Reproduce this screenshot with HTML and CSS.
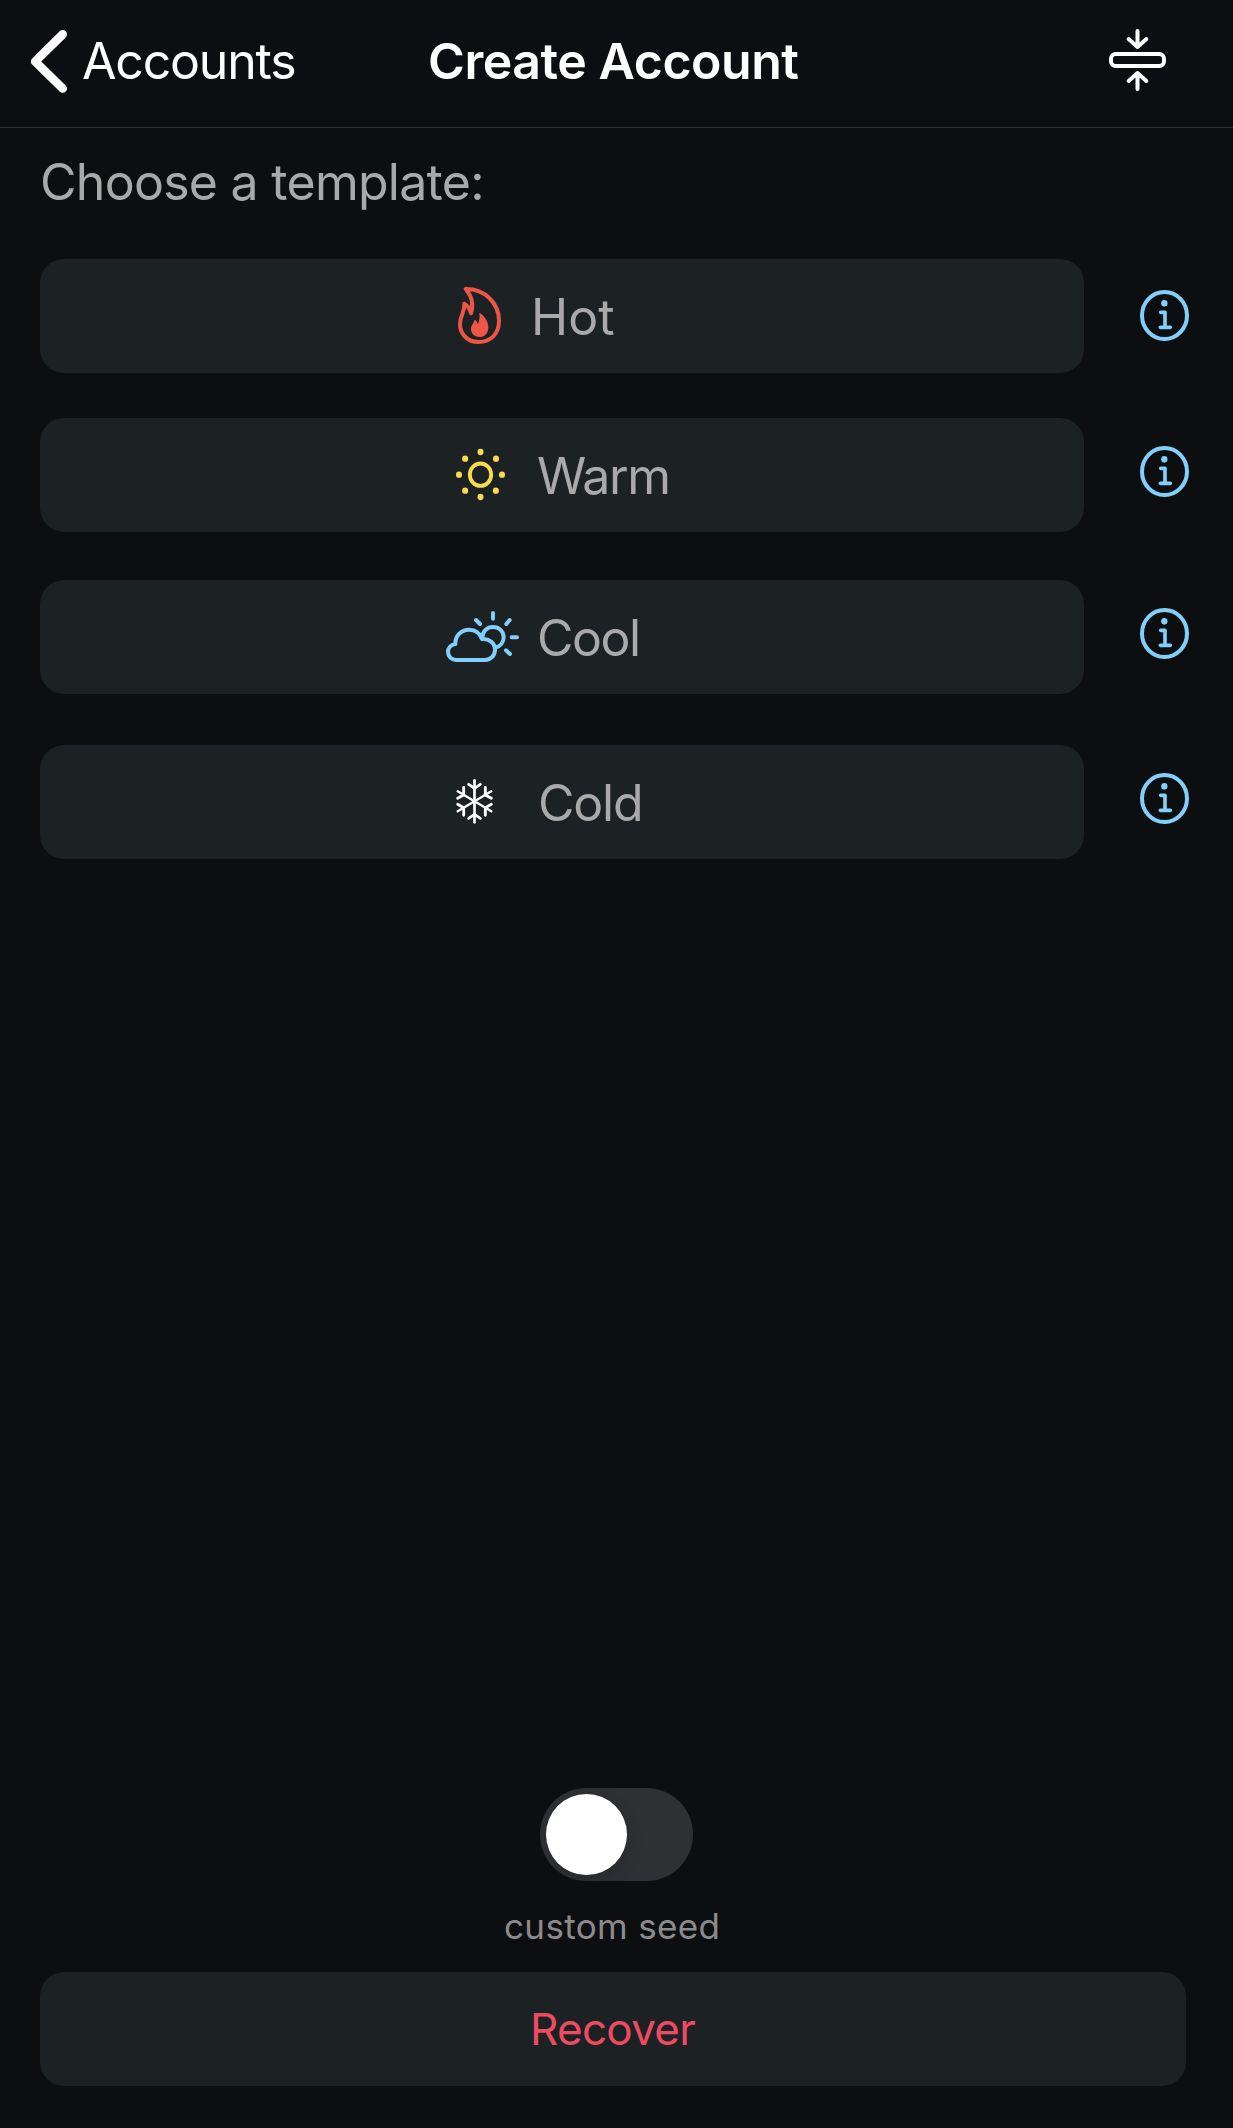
FILE: index.html
```html
<!DOCTYPE html>
<html lang="en">
<head>
<meta charset="utf-8">
<title>Create Account</title>
<link rel="stylesheet" href="styles.css">
</head>
<body>
<svg class="defs" aria-hidden="true">
  <symbol id="info" viewBox="231 111 162 168">
    <ellipse cx="313.500" cy="196.500" rx="67.500" ry="70.500" fill="none" stroke="currentColor" stroke-width="12"/>
    <ellipse cx="313" cy="160" rx="9.500" ry="10" fill="currentColor"/>
    <path d="M302 187H315V232M301 232H331" fill="none" stroke="currentColor" stroke-width="11" stroke-linecap="round" stroke-linejoin="round"/>
  </symbol>
</svg>
<header class="bar">
  <a class="back">
    <svg class="chevron" viewBox="84 84 126 201"><path d="M188 103L105.500 184.500L188 265.500" fill="none" stroke="#fff" stroke-width="26" stroke-linecap="round" stroke-linejoin="round"/></svg>
    <span class="t back-label">Accounts</span>
  </a>
  <h1 class="t title">Create Account</h1>
  <svg class="collapse" viewBox="75 42 195 216" fill="none" stroke="#fff" stroke-width="12" stroke-linecap="round" stroke-linejoin="round">
    <rect x="93" y="132" width="159" height="36" rx="14"/>
    <path d="M172.500 63V109M146 87L172.500 111L199 87M172.500 237V189M146 213L172.500 189L199 213"/>
  </svg>
</header>
<main class="content">
  <h2 class="t prompt">Choose a template:</h2>
  <div class="row hot">
    <button class="card">
      <svg class="icon" viewBox="30 -3 255 342">
        <path d="M107 87C165 86 207 130 207 182C207 222 182 246 145 246C112 246 90 222 90 192C90 165 105 158 103 131C113 136 119 145 123 160C132 132 125 108 107 87Z" fill="none" stroke="currentColor" stroke-width="12" stroke-linejoin="round"/>
        <path d="M148 158C170 172 175 190 175 203C175 220 163 231 148 231C132 231 123 220 123 207C123 195 131 190 134 179C139 181 142 187 143 192C148 183 150 171 148 158Z" fill="currentColor"/>
      </svg>
      <span class="t label">Hot</span>
    </button>
    <svg class="info"><use href="#info"/></svg>
  </div>
  <div class="row warm">
    <button class="card">
      <svg class="icon" viewBox="30 9 255 342" fill="currentColor">
        <ellipse cx="151.500" cy="179" rx="32" ry="33.500" fill="none" stroke="currentColor" stroke-width="11.500"/>
        <ellipse cx="151.500" cy="111" rx="9" ry="9.500"/><ellipse cx="151.500" cy="246" rx="9" ry="9.500"/>
        <ellipse cx="87" cy="179" rx="9" ry="9.500"/><ellipse cx="216" cy="179" rx="9" ry="9.500"/>
        <ellipse cx="105.500" cy="131" rx="9" ry="9.500"/><ellipse cx="198" cy="131" rx="9" ry="9.500"/>
        <ellipse cx="105.500" cy="227" rx="9" ry="9.500"/><ellipse cx="197.500" cy="227" rx="9" ry="9.500"/>
      </svg>
      <span class="t label">Warm</span>
    </button>
    <svg class="info"><use href="#info"/></svg>
  </div>
  <div class="row cool">
    <button class="card">
      <svg class="icon" viewBox="30 0 255 342" fill="none" stroke="currentColor" stroke-width="12" stroke-linecap="round" stroke-linejoin="round">
        <path d="M78 240H165C183 240 195 226 195 209C195 189 177 175 156 177C150 159 135 149 117 149C93 149 75 168 76 192C62 194 54 205 54 216C54 229 65 240 78 240Z"/>
        <path d="M157 172C158 154 171 141 189 141C207 141 221 154 221 172C221 187 211 199 197 203"/>
        <path d="M189 99V116M138 120L150 132M239 120L229 132M245 171.500H261M228 211L240 222"/>
      </svg>
      <span class="t label">Cool</span>
    </button>
    <svg class="info"><use href="#info"/></svg>
  </div>
  <div class="row cold">
    <button class="card">
      <svg class="icon" viewBox="30 15 255 342" fill="none" stroke="currentColor" stroke-width="8.500" stroke-linecap="round" stroke-linejoin="round">
        <path d="M133.500 121V247" stroke-width="8"/>
        <path d="M83 154L184 214M184 154L83 214" stroke-width="7"/>
        <path d="M116 133L133.500 145L151 133M116 235L133.500 223L151 235M101 142V165L83 175M166 142V165L184 175M83 193L101 203V226M184 193L166 203V226"/>
      </svg>
      <span class="t label">Cold</span>
    </button>
    <svg class="info"><use href="#info"/></svg>
  </div>
</main>
<footer class="footer">
  <div class="switch"><span class="knob"></span></div>
  <p class="t caption">custom seed</p>
  <button class="recover"><span class="t recover-label">Recover</span></button>
</footer>
</body>
</html>
```
FILE: styles.css
```css
* {
  box-sizing: border-box;
}

body {
  margin: 0;
  height: 2128px;
  display: flex;
  flex-direction: column;
  background: #0d0e10;
  font-family: Inter, "Liberation Sans", sans-serif;
  overflow: hidden;
}

.defs {
  display: none;
}

.t {
  margin: 0;
  font-size: 50px;
  font-weight: 400;
  line-height: 60px;
  white-space: nowrap;
}

button {
  margin: 0;
  padding: 0;
  border: 0;
  font-family: inherit;
  background: #1c2124;
}

/* Navigation bar */
.bar {
  flex: none;
  height: 128px;
  display: grid;
  grid-template-columns: 428px 677px 1fr;
  align-items: start;
  background: #0d0e12;
  border-bottom: 1px solid #303136;
  color: #fff;
}

.back {
  display: flex;
  padding-left: 28px;
}

.chevron {
  width: 42px;
  height: 67px;
  margin-top: 28px;
}

.back-label {
  margin: 31px 0 0 12px;
  letter-spacing: -1.2px;
}

.title {
  margin-top: 31px;
  font-weight: 600;
  letter-spacing: -0.45px;
}

.collapse {
  width: 65px;
  height: 72px;
  margin-top: 24px;
}

/* Template list */
.content {
  flex: 1;
  padding: 24px 0 0 40px;
}

.prompt {
  margin-bottom: 47px;
  letter-spacing: -0.72px;
  color: #a9a9a9;
}

.row {
  display: flex;
  align-items: flex-start;
  gap: 53px;
}

.card {
  width: 1044px;
  height: 114px;
  padding-left: 400px;
  display: flex;
  align-items: flex-start;
  border-radius: 24px;
}

.icon {
  flex: none;
  width: 85px;
  height: 114px;
}

.label {
  margin: 28px 0 0 12px;
  color: #a9a9a9;
}

.info {
  width: 54px;
  height: 56px;
  margin-top: 25px;
  color: #81cffb;
}

.hot .icon { color: #ed5545; }
.hot .info { margin-top: 28px; }
.warm .icon { color: #fadb4b; }
.cool .icon { color: #81cffb; }
.cold .icon { color: #fff; }

.hot .label { margin-left: 6px; }
.warm .label { letter-spacing: -1.4px; }
.cool .label { letter-spacing: -1.5px; }
.cold .label { margin-left: 13px; letter-spacing: -1.2px; }

.warm { margin-top: 45px; }
.cool { margin-top: 48px; }
.cold { margin-top: 51px; }

/* Seed switch and recovery */
.footer {
  flex: none;
  height: 340px;
  display: flex;
  flex-direction: column;
  align-items: flex-start;
  padding-left: 40px;
}

.switch {
  width: 153px;
  height: 93px;
  margin-left: 500px;
  padding: 6px;
  border-radius: 47px;
  background: #2f3033;
  overflow: hidden;
}

.knob {
  display: block;
  width: 81px;
  height: 81px;
  border-radius: 50%;
  background: #fff;
  box-shadow: 0 6px 18px rgba(0, 0, 0, 0.12);
}

.caption {
  margin: 24px 0 0 464px;
  font-size: 35px;
  line-height: 42px;
  letter-spacing: 0.35px;
  color: #8b8b8d;
}

.recover {
  width: 1146px;
  height: 114px;
  margin-top: 25px;
  padding: 0 0 0 490px;
  display: flex;
  border-radius: 24px;
}

.recover-label {
  margin-top: 31px;
  font-size: 44px;
  line-height: 52px;
  letter-spacing: -0.7px;
  color: #ee4a62;
}
```
